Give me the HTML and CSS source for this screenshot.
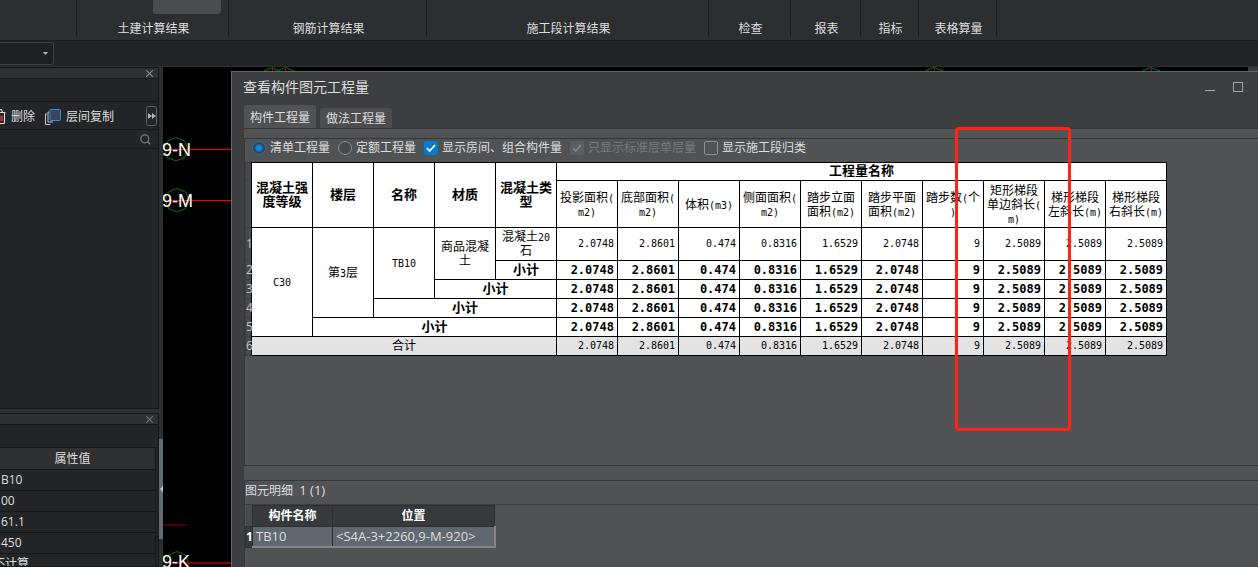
FILE: index.html
```html
<!DOCTYPE html>
<html lang="zh-CN">
<head>
<meta charset="utf-8">
<meta name="viewport" content="width=device-width, initial-scale=1">
<title>查看构件图元工程量</title>
<link rel="stylesheet" href="styles.css">
</head>
<body>
<header class="ribbon">
  <div class="group g-blank"></div>
  <div class="group g-civil"><span class="ribbon-thumb"></span>土建计算结果</div>
  <div class="group g-rebar">钢筋计算结果</div>
  <div class="group g-stage">施工段计算结果</div>
  <div class="group g-check">检查</div>
  <div class="group g-report">报表</div>
  <div class="group g-index">指标</div>
  <div class="group g-form">表格算量</div>
</header>
<div class="subbar">
  <div class="combo">
    <select aria-label="楼层"><option></option></select>
    <svg class="combo-arrow" width="5" height="3" viewBox="0 0 5 3"><path d="M0 0h5L2.5 3z" fill="#b4b5b6"/></svg>
  </div>
</div>
<main class="workspace">
  <aside class="side">
    <section class="panel panel-list">
      <div class="panel-title"><button class="icon-button" aria-label="关闭"><svg width="7" height="7" viewBox="0 0 7 7"><path d="M0 0l7 7M7 0L0 7" stroke="#8d8e90" stroke-width="1.1"/></svg></button></div>
      <div class="panel-strip"></div>
      <div class="panel-tools">
        <button class="tool tool-delete">
          <svg width="6" height="16" viewBox="0 0 6 16"><path d="M0 3.5h5.5M0 .8h1.5l1 2.4M4.5 4v9.5q0 1-1 1H0" fill="none" stroke="#dcdcdc" stroke-width="1.1"/><path d="M0 6.5v5.5M2 6.5v5.5" stroke="#e33" stroke-width="1.3"/></svg>
          删除</button>
        <button class="tool tool-copy">
          <svg width="16" height="16" viewBox="0 0 16 16"><path d="M2 5H.5v10.500h5M4 3H3v10h5" fill="none" stroke="#c4c5c6"/><rect x="5" y=".5" width="10.500" height="11" rx="1" fill="#37465a" stroke="#2f8ded"/></svg>
          层间复制</button>
        <button class="more" aria-label="更多"><svg width="8" height="6" viewBox="0 0 8 6"><path d="M0 0l4 3-4 3zM4 0l4 3-4 3z" fill="#b5b6b7"/></svg></button>
      </div>
      <div class="search">
        <input type="text" aria-label="搜索构件">
        <svg width="11" height="11" viewBox="0 0 11 11"><circle cx="4.800" cy="4.800" r="4" fill="none" stroke="#77787a" stroke-width="1.300"/><path d="M7.500 7.500l2.700 2.700" stroke="#77787a" stroke-width="1.400"/></svg>
      </div>
      <div class="list"></div>
    </section>
    <section class="panel panel-props">
      <div class="panel-title"><button class="icon-button" aria-label="关闭"><svg width="7" height="7" viewBox="0 0 7 7"><path d="M0 0l7 7M7 0L0 7" stroke="#707173" stroke-width="1.1"/></svg></button></div>
      <div class="panel-strip"></div>
      <table class="props">
        <thead><tr><th scope="col">属性值</th></tr></thead>
        <tbody>
          <tr><td>B10</td></tr>
          <tr><td>00</td></tr>
          <tr><td>61.1</td></tr>
          <tr><td>450</td></tr>
          <tr><td class="cut">不计算</td></tr>
        </tbody>
      </table>
    </section>
  </aside>
  <div class="splitter"><button class="grip" aria-label="折叠面板"><svg width="3" height="6" viewBox="0 0 3 6"><path d="M3 0v6L0 3z" fill="#c9cccf"/></svg></button></div>
  <section class="canvas">
    <svg class="drawing" role="img" aria-label="轴网">
      <g fill="none" stroke="#067806" stroke-width="1">
        <path id="hex" d="M13 70.500l8.500 3.500 3.500 8-3.500 8.500-8.500 3.500-8.500-3.500-3.500-8.500 3.500-8z"/>
        <use href="#hex" x="1" y="51"/>
        <use href="#hex" x="1" y="414"/>
        <path d="M101 4l8.500-3.500 7 3.500M114 4l8.500-3.500 9 3.500M762 4l9-3.500 9 3.500M979 4l9-3.500 9 3.500"/>
      </g>
      <path d="M109.500 1v3M122.500 1v3M771.500 1v3M988.500 1v3" stroke="#b00"/>
      <path d="M3 82.500h65M3 133.500h65" stroke="#f00000"/>
      <path d="M3 496h65" stroke="#8c0000" stroke-width="2"/>
      <path d="M0 458h23" stroke="#4a0000" stroke-width="2"/>
      <g class="axis"><text x="-1" y="89">9-N</text><text x="-1" y="140">9-M</text><text x="-1" y="501">9-K</text></g>
    </svg>
    <span class="canvas-corner"></span>
    <div class="dialog" role="dialog" aria-label="查看构件图元工程量">
      <header class="dialog-title">
        <h1>查看构件图元工程量</h1>
        <button class="icon-button" aria-label="最小化"><svg width="10" height="10" viewBox="0 0 10 10"><path d="M0 8.500h10" stroke="#a2a3a4"/></svg></button>
        <button class="icon-button" aria-label="最大化"><svg width="10" height="10" viewBox="0 0 10 10"><rect x=".5" y=".5" width="9" height="9" fill="none" stroke="#a2a3a4"/></svg></button>
      </header>
      <nav class="tabs">
        <button class="tab active">构件工程量</button>
        <button class="tab">做法工程量</button>
      </nav>
      <div class="dialog-body">
        <section class="frame frame-main">
          <div class="options">
            <label><input type="radio" name="kind" checked>清单工程量</label>
            <label><input type="radio" name="kind">定额工程量</label>
            <label><input type="checkbox" checked>显示房间、组合构件量</label>
            <label class="off"><input type="checkbox" checked disabled>只显示标准层单层量</label>
            <label><input type="checkbox">显示施工段归类</label>
          </div>
          <table class="quantities">
            <colgroup><col class="c-num"><col span="15" class="c-val"></colgroup>
            <thead>
              <tr class="h-top"><td class="num"></td><th rowspan="2">混凝土强<br>度等级</th><th rowspan="2">楼层</th><th rowspan="2">名称</th><th rowspan="2">材质</th><th rowspan="2">混凝土类<br>型</th><th colspan="10">工程量名称</th></tr>
              <tr class="h-sub"><td class="num"></td><th>投影面积<i>(</i><br><i>m2)</i></th><th>底部面积<i>(</i><br><i>m2)</i></th><th>体积<i>(m3)</i></th><th>侧面面积<i>(</i><br><i>m2)</i></th><th>踏步立面<br>面积<i>(m2)</i></th><th>踏步平面<br>面积<i>(m2)</i></th><th>踏步数<i>(</i>个<br><i>)</i></th><th>矩形梯段<br>单边斜长<i>(</i><br><i>m)</i></th><th>梯形梯段<br>左斜长<i>(m)</i></th><th>梯形梯段<br>右斜长<i>(m)</i></th></tr>
            </thead>
            <tbody>
              <tr class="tall"><td class="num">1</td><td rowspan="5" class="key"><i>C30</i></td><td rowspan="4" class="key">第<i>3</i>层</td><td rowspan="3" class="key"><i>TB10</i></td><td rowspan="2" class="key">商品混凝<br>土</td><td class="key">混凝土<i>20</i><br>石</td><td>2.0748</td><td>2.8601</td><td>0.474</td><td>0.8316</td><td>1.6529</td><td>2.0748</td><td>9</td><td>2.5089</td><td>2.5089</td><td>2.5089</td></tr>
              <tr class="sub"><td class="num">2</td><td class="key">小计</td><td>2.0748</td><td>2.8601</td><td>0.474</td><td>0.8316</td><td>1.6529</td><td>2.0748</td><td>9</td><td>2.5089</td><td>2.5089</td><td>2.5089</td></tr>
              <tr class="sub"><td class="num">3</td><td class="key" colspan="2">小计</td><td>2.0748</td><td>2.8601</td><td>0.474</td><td>0.8316</td><td>1.6529</td><td>2.0748</td><td>9</td><td>2.5089</td><td>2.5089</td><td>2.5089</td></tr>
              <tr class="sub"><td class="num">4</td><td class="key" colspan="3">小计</td><td>2.0748</td><td>2.8601</td><td>0.474</td><td>0.8316</td><td>1.6529</td><td>2.0748</td><td>9</td><td>2.5089</td><td>2.5089</td><td>2.5089</td></tr>
              <tr class="sub"><td class="num">5</td><td class="key" colspan="4">小计</td><td>2.0748</td><td>2.8601</td><td>0.474</td><td>0.8316</td><td>1.6529</td><td>2.0748</td><td>9</td><td>2.5089</td><td>2.5089</td><td>2.5089</td></tr>
              <tr class="total"><td class="num">6</td><td class="key" colspan="5">合计</td><td>2.0748</td><td>2.8601</td><td>0.474</td><td>0.8316</td><td>1.6529</td><td>2.0748</td><td>9</td><td>2.5089</td><td>2.5089</td><td>2.5089</td></tr>
            </tbody>
          </table>
        </section>
        <section class="frame frame-detail">
          <h2>图元明细&nbsp; <span>1 (1)</span></h2>
          <table class="detail">
            <colgroup><col class="d-num"><col class="d-name"><col class="d-pos"></colgroup>
            <thead><tr><td class="num"></td><th scope="col">构件名称</th><th scope="col">位置</th></tr></thead>
            <tbody><tr><th class="num" scope="row">1</th><td>TB10</td><td>&lt;S4A-3+2260,9-M-920&gt;</td></tr></tbody>
          </table>
        </section>
      </div>
      <div class="marker"></div>
    </div>
  </section>
</main>
</body>
</html>
```
FILE: styles.css
```css
* { box-sizing: border-box; }

body {
  margin: 0;
  height: 100vh;
  display: flex;
  flex-direction: column;
  overflow: hidden;
  background: #232426;
  color: #dededf;
  font: 12px/16px "Open Sans", "Noto Sans CJK SC", sans-serif;
}

button, input, select { font: inherit; color: inherit; }
button { background: none; border: 0; padding: 0; }
svg { display: block; flex: none; }
table { border-collapse: collapse; table-layout: fixed; }

/* Ribbon */
.ribbon {
  display: flex;
  flex: none;
  height: 41px;
  padding-bottom: 3px;
  background: #2d2e30;
  border-bottom: 1px solid #1b1c1d;
}
.group {
  display: flex;
  flex-direction: column;
  align-items: center;
  justify-content: flex-end;
  padding: 0 0 0 2px;
  border-right: 1px solid #1c1d1e;
}
.g-blank { width: 77px; }
.g-civil { width: 152px; justify-content: space-between; }
.g-rebar { width: 198px; }
.g-stage { width: 282px; }
.g-check { width: 82px; }
.g-report { width: 70px; }
.g-index { width: 58px; }
.g-form { width: 78px; }
.ribbon-thumb {
  width: 68px;
  height: 14px;
  margin-right: 7px;
  align-self: flex-end;
  border-radius: 0 0 3px 3px;
  background: #4b4c4e;
}

.subbar { flex: none; height: 26px; padding-top: 1px; border-bottom: 1px solid #2d2e30; }
.combo { position: relative; width: 54px; height: 23px; }
.combo select {
  appearance: none;
  width: 100%;
  height: 100%;
  border: 1px solid #3e3f41;
  border-left: 0;
  border-radius: 0 3px 3px 0;
  background: #1f2022;
}
.combo-arrow { position: absolute; right: 6px; top: 10px; }

/* Left panels */
.workspace { flex: 1; display: flex; min-height: 0; }
.side {
  width: 159px;
  flex: none;
  display: flex;
  flex-direction: column;
  gap: 4px;
  background: #2d2e30;
  overflow: hidden;
}
.panel {
  display: flex;
  flex-direction: column;
  border: 1px solid #161718;
  border-left: 0;
  background: #242527;
}
.panel-list { flex: 343 1 0; min-height: 0; }
.panel-props { flex: 153 1 0; min-height: 0; overflow: hidden; }
.panel-title {
  flex: none;
  display: flex;
  justify-content: flex-end;
  align-items: center;
  height: 11px;
  padding-right: 5px;
  background: #2f3032;
  border-bottom: 1px solid #161718;
}
.panel-strip { flex: none; height: 23px; border-bottom: 1px solid #18191a; }
.panel-tools {
  flex: none;
  display: flex;
  align-items: center;
  gap: 10px;
  height: 28px;
  padding-right: 1px;
  border-bottom: 1px solid #18191a;
}
.tool { display: flex; align-items: center; gap: 5px; padding-top: 2px; white-space: nowrap; }
.more {
  display: flex;
  align-items: center;
  justify-content: center;
  width: 11px;
  height: 20px;
  margin-left: auto;
  border: 1px solid #606163;
  border-radius: 3px;
}
.search {
  flex: none;
  display: flex;
  align-items: center;
  height: 19px;
  padding-right: 7px;
  border-bottom: 1px solid #18191a;
}
.search input { flex: 1; min-width: 0; height: 16px; border: 0; padding: 0; background: none; }

.props { width: 156px; }
.props th, .props td {
  height: 21px;
  padding: 1px 1px 0;
  border-right: 1px solid #161718;
  border-bottom: 1px solid #161718;
  text-align: left;
  white-space: nowrap;
}
.props th {
  padding-right: 11px;
  background: #2f3032;
  font-weight: 400;
  text-align: center;
}
.props .cut { text-indent: -8px; }

.splitter { width: 4px; flex: none; padding-top: 372px; background: #2d2e30; }
.grip {
  display: flex;
  align-items: center;
  justify-content: flex-end;
  width: 4px;
  height: 100px;
  background: #626c77;
}

/* Drawing area */
.canvas { position: relative; flex: 1; min-width: 0; overflow: hidden; background: #000; }
.canvas-corner { position: absolute; top: 0; right: 0; width: 10px; height: 4px; background: #3a3b3d; }
.drawing { width: 100%; height: 100%; }
.axis { fill: #fff; font: 18px "Liberation Sans", sans-serif; }

/* Dialog */
.dialog {
  position: absolute;
  inset: 4px 0 0 68px;
  display: flex;
  flex-direction: column;
  border: solid #66676a;
  border-width: 1px 0 0 1px;
  background: #3d3e40;
}
.dialog-title {
  display: flex;
  align-items: center;
  gap: 18px;
  height: 29px;
  padding: 0 15px 0 11px;
}
.dialog-title h1 { flex: 1; margin: 0; font-size: 14px; font-weight: 400; }
.tabs { display: flex; align-items: flex-end; gap: 4px; height: 27px; padding-left: 12px; }
.tab {
  width: 72px;
  height: 20px;
  padding-top: 2px;
  border-radius: 3px 3px 0 0;
  background: #4c4d4f;
}
.tab.active { height: 23px; background: #505254; }
.dialog-body {
  flex: 1;
  display: flex;
  flex-direction: column;
  gap: 14px;
  min-height: 0;
  margin-left: 12px;
  padding-top: 9px;
  background: #505254;
  border-top: 1px solid #36373a;
}
.frame { border: 1px solid #35373a; border-right: 0; border-radius: 2px 0 0 0; }
.frame-main { flex: 328 1 0; min-height: 0; }
.frame-detail { flex: 87 1 0; min-height: 0; border-bottom: 0; }

.options { display: flex; align-items: center; gap: 8px; height: 17px; margin: 0 0 6px 7px; }
.options label { display: flex; align-items: center; gap: 4px; white-space: nowrap; }
.options input { appearance: none; width: 14px; height: 14px; margin: 0; border: 1px solid #8e8f91; }
.options input[type="radio"] { border-radius: 50%; background: #47494b; }
.options input[type="radio"]:checked {
  border-color: #0f7ac6;
  background: radial-gradient(circle, #0a84d8 3px, #414447 4px);
}
.options input[type="checkbox"] { border-radius: 2px; }
.options input[type="checkbox"]:checked {
  border-color: #057bd0;
  background: #057bd0 url("data:image/svg+xml,%3Csvg xmlns='http://www.w3.org/2000/svg' viewBox='0 0 12 12'%3E%3Cpath d='M2 6.200l2.700 2.800L10 3' fill='none' stroke='white' stroke-width='1.800'/%3E%3C/svg%3E") center / 12px no-repeat;
}
.options input:disabled:checked {
  border-color: #5c5e60;
  background-color: #5c5e60;
  background-image: url("data:image/svg+xml,%3Csvg xmlns='http://www.w3.org/2000/svg' viewBox='0 0 12 12'%3E%3Cpath d='M2 6.200l2.700 2.800L10 3' fill='none' stroke='%23808284' stroke-width='1.800'/%3E%3C/svg%3E");
}
.options .off { color: #77797b; }

/* Quantities */
.quantities {
  width: 921px;
  color: #000;
  font: 12px/14px "Noto Sans CJK SC", sans-serif;
}
.c-num { width: 6px; }
.c-val { width: 61px; }
.quantities th, .quantities td {
  height: 19px;
  padding: 0;
  border: 1px solid #000;
  background: #fff;
  white-space: nowrap;
}
.quantities th { padding-bottom: 3px; font-size: 13px; }
.quantities td {
  padding-right: 3px;
  text-align: right;
  font-family: "DejaVu Sans Mono", monospace;
  font-size: 10px;
}
.quantities i { font: 10px/10px "DejaVu Sans Mono", monospace; }
.quantities .h-top > * { height: 18px; line-height: 14px; }
.quantities .h-sub th { height: 47px; padding-bottom: 1px; font-size: 12px; font-weight: 400; }
.quantities .tall > td { height: 33px; }
.quantities .sub td { font-size: 12px; font-weight: 700; }
.quantities .key {
  padding: 0 0 2px;
  text-align: center;
  font-family: "Noto Sans CJK SC", sans-serif;
  font-size: 12px;
}
.quantities .sub .key { font-size: 13px; }
.quantities .total td { background: #e3e3e3; }
.quantities tr > .num {
  padding: 0;
  border-color: #3c3e40;
  border-right-color: #000;
  background: #47494b;
  color: #c5c6c7;
  text-align: left;
  font: 12px/14px "Open Sans", sans-serif;
}

/* Element details */
.frame-detail h2 {
  height: 24px;
  margin: 0;
  border-bottom: 1px solid #3c3e40;
  font-size: 12px;
  font-weight: 400;
  line-height: 18px;
}
.frame-detail h2 span, .detail td { font-size: 13px; }
.detail { width: 249px; }
.d-num { width: 7px; }
.d-name { width: 80px; }
.d-pos { width: 162px; }
.detail th, .detail td { height: 21px; padding: 0 3px; border: 1px solid #2e2f31; white-space: nowrap; }
.detail th { background: #38393b; color: #fff; font-weight: 700; }
.detail td { border-bottom: 2px solid #858585; background: #5f6771; }
.detail td:last-child { border-right: 2px solid #858585; }
.detail thead td { border: 0; background: #47494b; }
.detail .num { padding: 0; }

.marker {
  position: absolute;
  left: 723px;
  top: 55px;
  width: 116px;
  height: 304px;
  border: 3px solid #ff2317;
  border-radius: 4px;
  pointer-events: none;
}
```
